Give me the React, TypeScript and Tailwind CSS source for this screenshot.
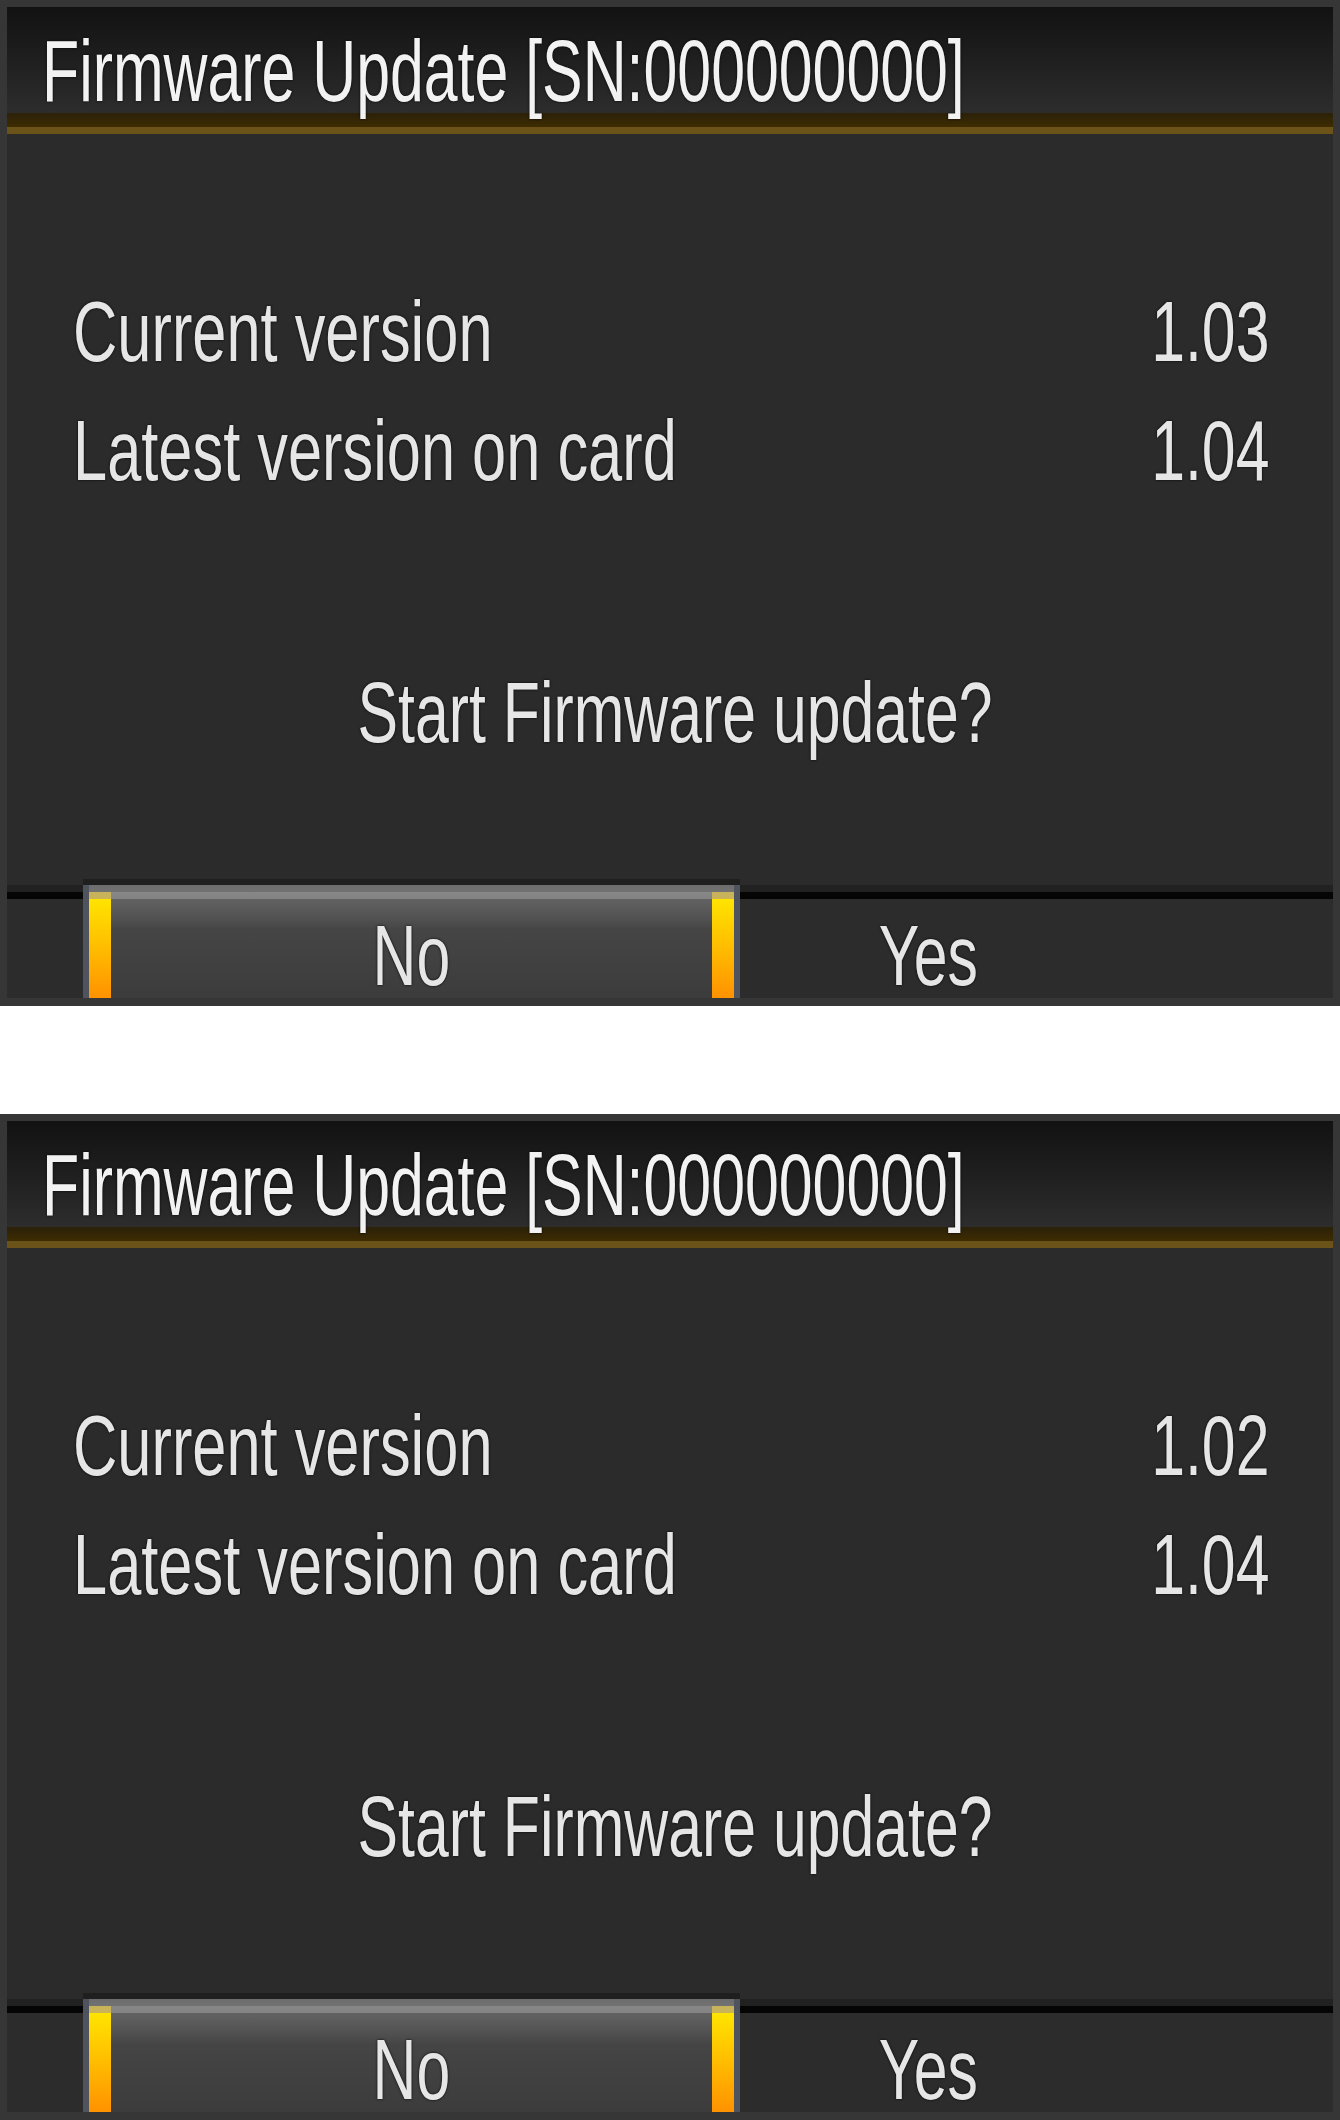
import type { ReactNode } from 'react';

const TEXT = 'leading-none whitespace-nowrap text-[85px] text-[#e6e6e6] [text-shadow:0_0_3px_#000]';

function Squeezed({ children, origin = 'left' }: { children: ReactNode; origin?: 'left' | 'right' | 'center' }) {
  const o = origin === 'left' ? 'origin-left' : origin === 'right' ? 'origin-right' : 'origin-center';
  return <span className={`inline-block scale-x-[0.715] ${o}`}>{children}</span>;
}

function VersionRow({ label, value, className = '' }: { label: string; value: string; className?: string }) {
  return (
    <div className={`flex items-start justify-between pl-[66px] pr-[64px] ${TEXT} ${className}`}>
      <span className="inline-block origin-left scale-x-[0.722]">{label}</span>
      <Squeezed origin="right">{value}</Squeezed>
    </div>
  );
}

function YellowBar() {
  return (
    <div className="mt-[7px] h-[106px] w-[22px] shrink-0 border-t-[7px] border-[#c8b25a] bg-linear-to-b from-[#ffe400] to-[#ff9200]" />
  );
}

function Panel({ current, latest }: { current: string; latest: string }) {
  return (
    <section className="flex h-[1006px] w-[1340px] flex-col border-x-[7px] border-t-[7px] border-b-8 border-[#363636] bg-[#2b2b2b]">
      <header className="h-[106px] shrink-0 bg-linear-to-b from-[#121212] to-[#2d2d2d] pl-[35px] pt-[20px]">
        <h1 className="inline-block origin-left scale-x-[0.691] whitespace-nowrap text-[88px] font-normal leading-none text-[#f2f2f2] [text-shadow:0_0_3px_#000]">
          Firmware Update [SN:000000000]
        </h1>
      </header>
      <div className="h-[14px] shrink-0 bg-linear-to-b from-[#2b2109] to-[#3e2c00]" />
      <div className="h-[7px] shrink-0 bg-[#6b5218]" />

      <div className="flex h-[751px] shrink-0 flex-col pt-[155px]">
        <VersionRow label="Current version" value={current} />
        <VersionRow label="Latest version on card" value={latest} className="mt-[34px]" />
        <p className={`mt-[177px] pl-[10px] text-center ${TEXT}`}>
          <Squeezed origin="center">Start Firmware update?</Squeezed>
        </p>
      </div>

      <div className="h-[14px] shrink-0 border-b-[7px] border-[#050505] bg-[#212121]" />
      <div className="flex h-[99px] shrink-0 bg-[#2c2c2c] pl-[76px]">
        <div className="relative -mt-[20px] flex h-[119px] w-[657px] shrink-0 flex-col">
          <div className="h-[6px] bg-[#1f1f1f]" />
          <div className="flex h-[113px] border-x-[6px] border-[#4e535d] bg-[linear-gradient(to_bottom,#6c6c6c_0px,#727272_7px,#878787_7px,#838383_14px,#626262_14px,#555555_30px,#454545_45px,#3c3c3c_100%)]">
            <YellowBar />
            <div className={`flex flex-1 items-end justify-center ${TEXT}`}>
              <Squeezed origin="center">No</Squeezed>
            </div>
            <YellowBar />
          </div>
        </div>
        <div className={`flex w-[376px] items-end justify-center ${TEXT}`}>
          <Squeezed origin="center">Yes</Squeezed>
        </div>
      </div>
    </section>
  );
}

export default function App() {
  return (
    <div className="w-[1340px] bg-white [font-family:'Liberation_Sans',Arial,sans-serif]">
      <Panel current="1.03" latest="1.04" />
      <div className="h-[108px]" />
      <Panel current="1.02" latest="1.04" />
    </div>
  );
}
